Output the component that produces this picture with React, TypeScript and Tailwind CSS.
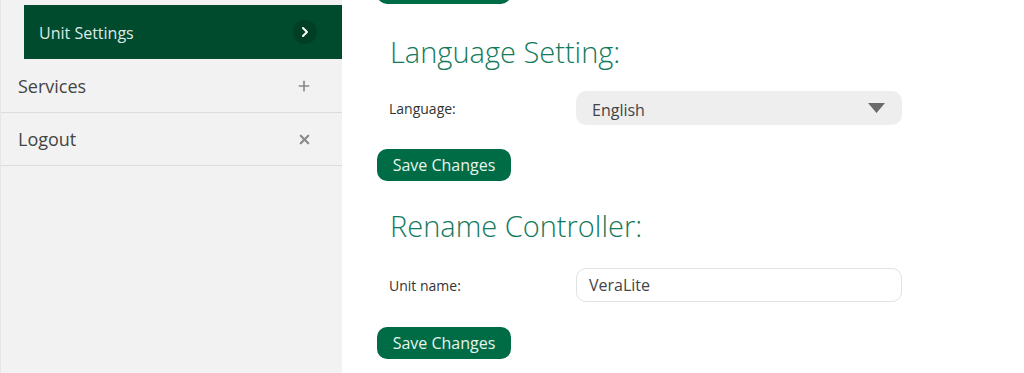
import { ChevronRight, Plus, X } from 'lucide-react';

function SaveButton() {
  return (
    <button className="h-[32px] w-[134px] rounded-[10px] bg-[#006c45] text-[16px] text-[#e8f3ee]">
      Save Changes
    </button>
  );
}

export default function App() {
  return (
    <div className="flex h-[373px] w-[1024px] overflow-hidden bg-white font-['Open_Sans',sans-serif]">
      <aside className="w-[342px] shrink-0 border-l border-[#e6e6e6] bg-[#f2f2f2]">
        <div className="pt-[5px] pl-[23px]">
          <div className="flex h-[54px] items-center justify-between bg-[#004b2d] pr-[25px] pl-[15px] text-[16px] text-[#dfe9e4]">
            <span className="pt-[2px]">Unit Settings</span>
            <span className="flex h-[24px] w-[24px] items-center justify-center rounded-full bg-[#003f26]">
              <ChevronRight className="h-4 w-4 text-white" strokeWidth={3} />
            </span>
          </div>
        </div>
        <div className="flex h-[54px] items-center justify-between border-b border-[#dcdcdc] pr-[30px] pl-[17px] text-[18px] text-[#444]">
          <span className="pt-[2px]">Services</span>
          <Plus className="h-[16px] w-[16px] text-[#8a8a8a]" strokeWidth={2.5} />
        </div>
        <div className="flex h-[53px] items-center justify-between border-b border-[#dcdcdc] pr-[30px] pl-[17px] text-[18px] text-[#444]">
          <span>Logout</span>
          <X className="h-[15px] w-[15px] text-[#8a8a8a]" strokeWidth={3.5} />
        </div>
      </aside>

      <main className="flex-1 pl-[35px]">
        <div className="-mt-[28px] h-[32px] w-[134px] rounded-[10px] bg-[#006c45]" />

        <h2 className="mt-[30px] pl-[13px] text-[29px] leading-[36px] font-light text-[#137a5c]">
          Language Setting:
        </h2>
        <div className="mt-[21px] flex items-center">
          <span className="w-[199px] pl-[12px] text-[14px] text-[#333]">Language:</span>
          <div className="flex h-[34px] w-[326px] items-center justify-between rounded-[10px] bg-[#eeeeee] pr-[17px] pl-[16px] text-[16px] text-[#444]">
            <span className="pt-[4px]">English</span>
            <svg width="17" height="10" viewBox="0 0 17 10">
              <path d="M0 0 H17 L8.5 10 Z" fill="#6a6a6a" />
            </svg>
          </div>
        </div>
        <div className="mt-[24px]">
          <SaveButton />
        </div>

        <h2 className="mt-[27px] pl-[13px] text-[29px] leading-[36px] font-light text-[#137a5c]">
          Rename Controller:
        </h2>
        <div className="mt-[24px] flex items-center">
          <span className="w-[199px] pl-[12px] text-[14px] text-[#333]">Unit name:</span>
          <div className="flex h-[34px] w-[326px] items-center rounded-[10px] border border-[#e2e2e2] bg-white pl-[12px] text-[16px] text-[#444]">
            VeraLite
          </div>
        </div>
        <div className="mt-[25px]">
          <SaveButton />
        </div>
      </main>
    </div>
  );
}
